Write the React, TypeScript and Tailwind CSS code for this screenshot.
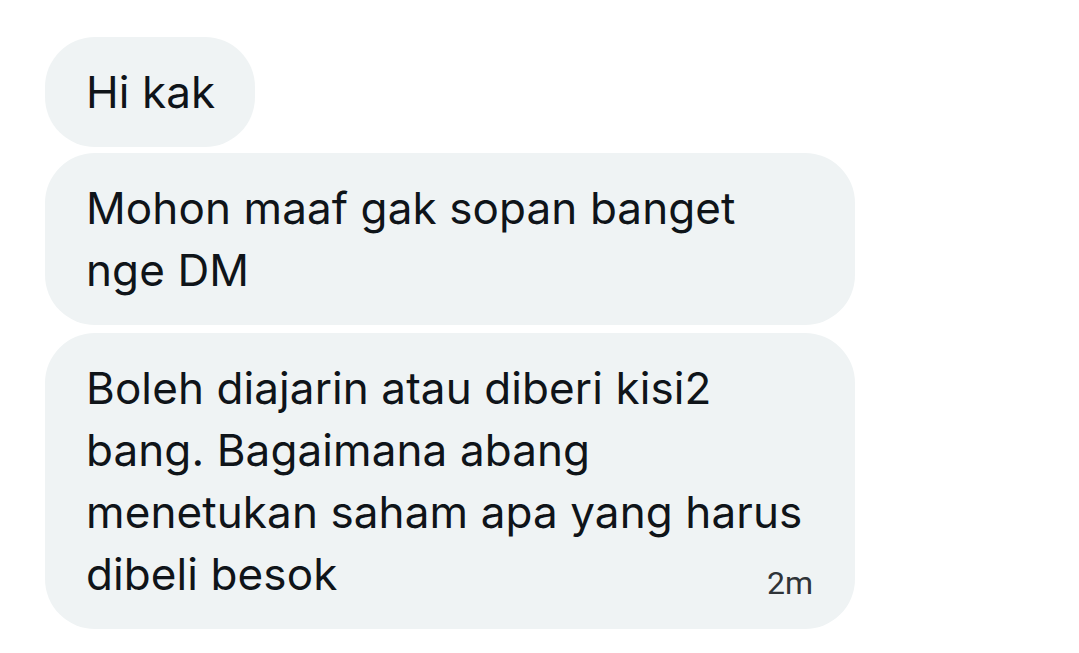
import React from "react";

type Message = {
  lines: string[];
  wide?: boolean;
  time?: string;
  gap: string;
};

const messages: Message[] = [
  { lines: ["Hi kak"], gap: "mb-[6px]" },
  { lines: ["Mohon maaf gak sopan banget", "nge DM"], wide: true, gap: "mb-[8px]" },
  {
    lines: [
      "Boleh diajarin atau diberi kisi2",
      "bang. Bagaimana abang",
      "menetukan saham apa yang harus",
      "dibeli besok",
    ],
    wide: true,
    time: "2m",
    gap: "",
  },
];

function Bubble({ msg }: { msg: Message }) {
  return (
    <div
      className={`${msg.wide ? "w-[810px]" : "w-[210px]"} ${msg.gap} rounded-[50px] bg-[#eff3f4] pl-[41px] pr-[42px] py-[24px] text-[#0f1419]`}
    >
      {msg.lines.map((line, i) => {
        const last = i === msg.lines.length - 1;
        return (
          <div key={i} className="flex items-baseline justify-between h-[62px] leading-[62px] whitespace-nowrap">
            <span className="text-[44px] tracking-[0.1px]">{line}</span>
            {last && msg.time && (
              <span className="text-[32px] text-[#2f3438] translate-y-[4px] font-['Roboto',sans-serif]">
                {msg.time}
              </span>
            )}
          </div>
        );
      })}
    </div>
  );
}

export default function App() {
  return (
    <div className="w-[1079px] h-[653px] bg-white pl-[45px] pt-[37px] font-['Inter',sans-serif]">
      {messages.map((m, i) => (
        <Bubble key={i} msg={m} />
      ))}
    </div>
  );
}
